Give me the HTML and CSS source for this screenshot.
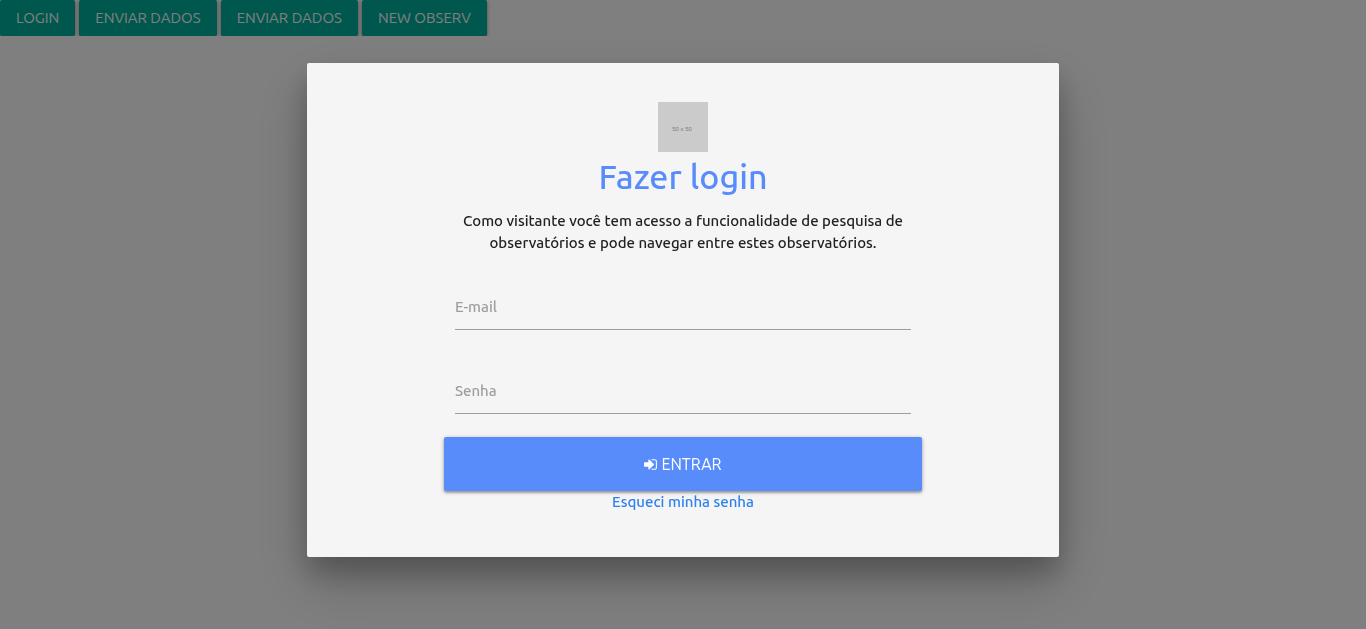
FILE: index.html
```html
<!DOCTYPE html>
<html lang="pt-BR">
<head>
<meta charset="utf-8">
<meta name="viewport" content="width=device-width, initial-scale=1">
<title>Fazer login</title>
<link rel="stylesheet" href="styles.css">
</head>
<body>
<nav class="toolbar">
  <button class="btn" type="button">Login</button>
  <button class="btn" type="button">Enviar dados</button>
  <button class="btn" type="button">Enviar dados</button>
  <button class="btn" type="button">New observ</button>
</nav>
<div class="overlay">
  <main class="modal" role="dialog" aria-modal="true" aria-labelledby="title">
    <form class="login">
      <svg class="logo" viewBox="0 0 50 50" role="img" aria-label="50 x 50">
        <rect width="50" height="50" fill="#cbcbcb"/>
        <text class="logo-text" x="24" y="29" text-anchor="middle">50 x 50</text>
      </svg>
      <h1 class="title" id="title">Fazer login</h1>
      <p class="intro">Como visitante você tem acesso a funcionalidade de pesquisa de observatórios e pode navegar entre estes observatórios.</p>
      <div class="field">
        <label class="field-label" for="email">E-mail</label>
        <input class="field-input" id="email" type="email">
      </div>
      <div class="field">
        <label class="field-label" for="password">Senha</label>
        <input class="field-input" id="password" type="password">
      </div>
      <button class="submit" type="submit">
        <svg class="submit-icon" viewBox="0 0 1536 1792" aria-hidden="true">
          <path fill="currentColor" d="M1184 896q0 26-19 45l-544 544q-19 19-45 19t-45-19-19-45v-288H64q-26 0-45-19T0 1088V704q0-26 19-45t45-19h448V352q0-26 19-45t45-19 45 19l544 544q19 19 19 45zM1536 544v704q0 119-84.500 203.500T1248 1536H928q-13 0-22.500-9.500T896 1504q0-4-1-20t-.5-26.500 3-23.500 10-19.500 20.500-6.500h320q66 0 113-47t47-113V544q0-66-47-113t-113-47H936l-11.500-1-11.500-3-8-5.500-7-9-2-13.500q0-4-1-20t-.5-26.500 3-23.500 10-19.500 20.500-6.500h320q119 0 203.500 84.500T1536 544z"/>
        </svg>
        <span>Entrar</span>
      </button>
      <a class="forgot" href="#">Esqueci minha senha</a>
    </form>
  </main>
</div>
</body>
</html>
```
FILE: styles.css
```css
* { box-sizing: border-box; }

body {
  margin: 0;
  background: #fff;
  color: #212121;
  font-family: Ubuntu, "Noto Sans", sans-serif;
  font-size: 15px;
  font-weight: 500;
  line-height: 22px;
}

.toolbar {
  display: flex;
  flex-wrap: wrap;
  gap: 4px;
}

.btn,
.submit {
  border: 0;
  border-radius: 2px;
  color: #fff;
  font: inherit;
  font-weight: 400;
  text-transform: uppercase;
  box-shadow: 0 2px 2px rgba(0, 0, 0, .2), 0 1px 4px rgba(0, 0, 0, .3);
  cursor: pointer;
}

.btn {
  height: 36px;
  padding: 0 16px;
  background: #00ae9c;
}

.overlay {
  position: fixed;
  inset: 0;
  overflow: auto;
  padding-top: 63px;
  background: rgba(0, 0, 0, .5);
}

.modal {
  width: 55%;
  margin: 0 auto;
  padding: 39px 24px 44px;
  border-radius: 2px;
  background: #f5f5f5;
  box-shadow: 0 16px 28px rgba(0, 0, 0, .22), 0 25px 55px rgba(0, 0, 0, .21);
}

.login {
  display: flex;
  flex-direction: column;
  align-items: center;
  width: 68%;
  margin: 0 auto;
}

.logo {
  width: 50px;
  height: 50px;
}

.logo-text {
  fill: #7c7c7c;
  font-family: "Liberation Sans", sans-serif;
  font-size: 6px;
}

.title {
  margin: 4px 0 14px;
  color: #578cfa;
  font-size: 34px;
  font-weight: 500;
  line-height: 40px;
}

.intro {
  margin: 0 0 32px;
  padding: 0 11px;
  text-align: center;
}

.field {
  display: grid;
  align-self: stretch;
  margin: 0 11px 40px;
}

.field + .field { margin-bottom: 23px; }

.field-label,
.field-input { grid-area: 1 / 1; }

.field-label {
  padding-top: 10px;
  color: #9e9e9e;
  pointer-events: none;
}

.field-input {
  width: 100%;
  height: 44px;
  padding: 0;
  border: 0;
  border-bottom: 1px solid #9e9e9e;
  outline: 0;
  background: transparent;
  font: inherit;
}

.submit {
  display: flex;
  align-items: center;
  justify-content: center;
  gap: 4px;
  width: 100%;
  height: 54px;
  background: #578cfa;
  font-size: 16px;
}

.submit-icon {
  width: 13px;
  height: 15px;
}

.forgot {
  color: #2d80ee;
  text-decoration: none;
}
```
